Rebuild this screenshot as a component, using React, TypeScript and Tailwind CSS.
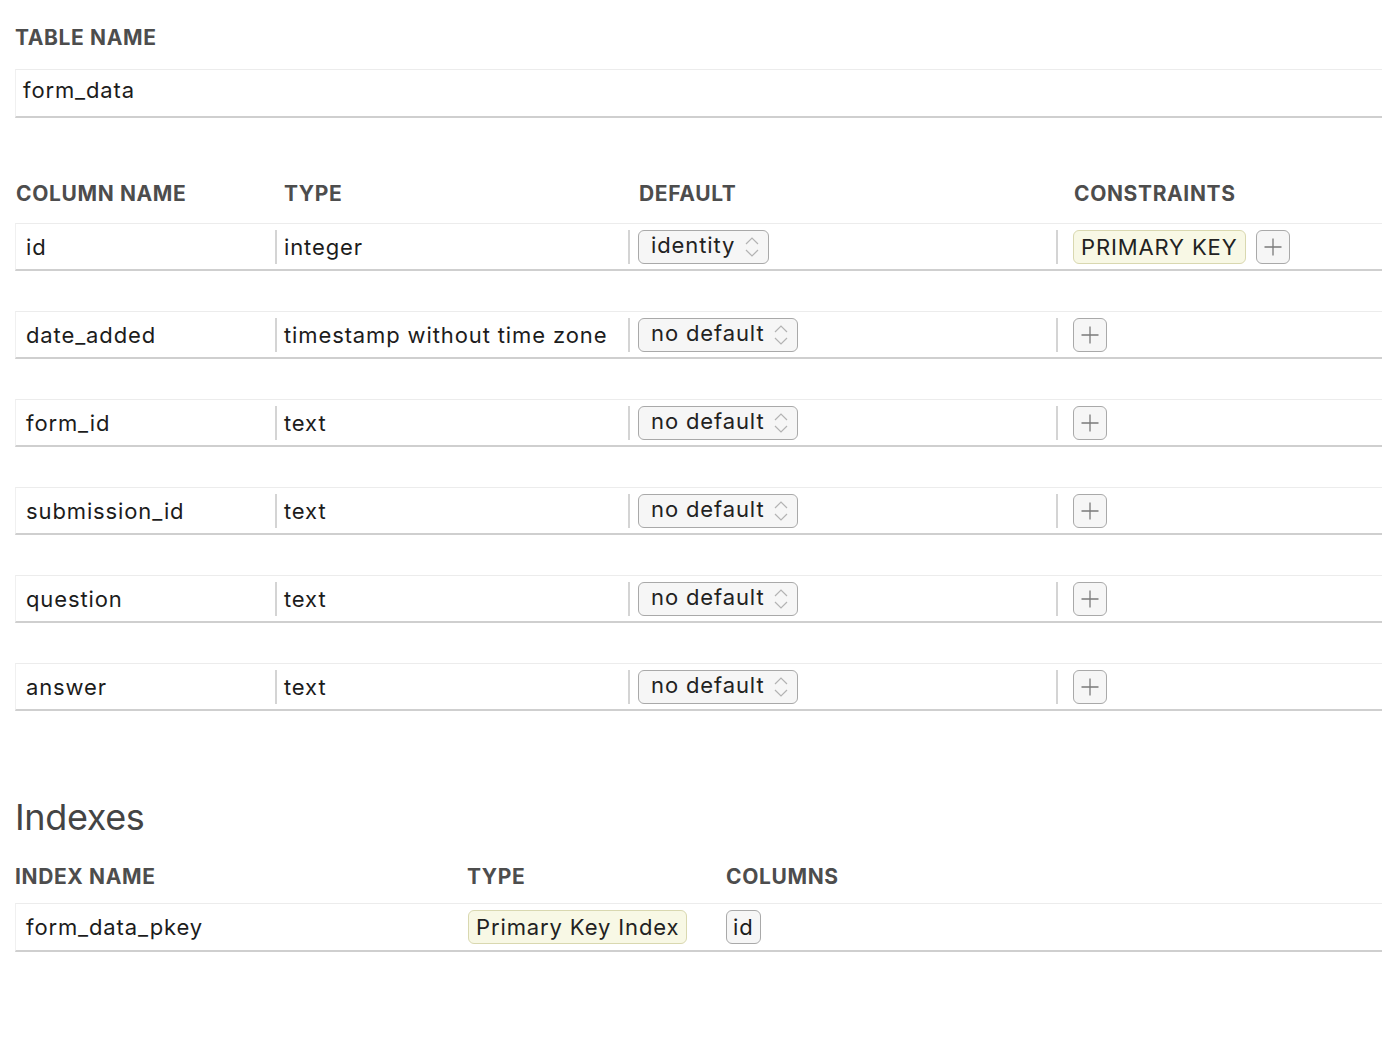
import React from 'react'

type Column = {
  name: string
  type: string
  def: string
  constraint?: string
}

const columns: Column[] = [
  { name: 'id', type: 'integer', def: 'identity', constraint: 'PRIMARY KEY' },
  { name: 'date_added', type: 'timestamp without time zone', def: 'no default' },
  { name: 'form_id', type: 'text', def: 'no default' },
  { name: 'submission_id', type: 'text', def: 'no default' },
  { name: 'question', type: 'text', def: 'no default' },
  { name: 'answer', type: 'text', def: 'no default' },
]

function Chevrons() {
  return (
    <svg width="18" height="26" viewBox="0 0 18 26" fill="none" stroke="#b3b3b3" strokeWidth="1.2">
      <path d="M3 10 L9 4 L15 10" />
      <path d="M3 16 L9 22 L15 16" />
    </svg>
  )
}

function Select({ value }: { value: string }) {
  return (
    <div className="inline-flex h-[34px] items-center gap-[8px] rounded-[6px] border-[1.5px] border-[#a9a9a9] bg-[#f6f6f6] pl-[12px] pr-[7px] text-[22px] leading-none tracking-[0.04em] text-[#222]">
      <span className="-mt-[3px]">{value}</span>
      <Chevrons />
    </div>
  )
}

function PlusButton() {
  return (
    <div className="flex h-[34px] w-[34px] items-center justify-center rounded-[6px] border-[1.5px] border-[#a9a9a9] bg-[#f6f6f6]">
      <svg width="20" height="20" viewBox="0 0 20 20" stroke="#7a7a7a" strokeWidth="1.3">
        <path d="M10 1.5 V18.5 M1.5 10 H18.5" />
      </svg>
    </div>
  )
}

function Badge({ children }: { children: React.ReactNode }) {
  return (
    <div className="inline-flex h-[34px] items-center rounded-[6px] border-[1.5px] border-[#d9d8b0] bg-[#f8f8e5] px-[7px] text-[22px] leading-none tracking-[0.04em] text-[#222]">
      {children}
    </div>
  )
}

function Sep() {
  return <div className="h-[34px] w-[2px] shrink-0 bg-[#d4d4d4]" />
}

export default function App() {
  return (
    <div
      className="min-h-[1038px] bg-white pl-[15px] pt-[26px] text-[#1c1c1c]"
      style={{ fontFamily: 'Inter, "Noto Sans", sans-serif' }}
    >
      <div className="text-[21px] font-bold leading-[24px] tracking-[0.03em] text-[#4d4d4d]">TABLE NAME</div>

      <div className="mt-[19px] flex h-[49px] items-center border-t border-l border-b-2 border-t-[#ececec] border-l-[#f0f0f0] border-b-[#cfcfcf] pb-[5px] pl-[7px] text-[22px] tracking-[0.04em]">
        form_data
      </div>

      <div className="mt-[64px] grid grid-cols-[259px_353px_428px_1fr] text-[21px] font-bold leading-[24px] tracking-[0.03em] text-[#4d4d4d]">
        <div className="pl-[1px]">COLUMN NAME</div>
        <div className="pl-[10px]">TYPE</div>
        <div className="pl-[12px]">DEFAULT</div>
        <div className="pl-[19px]">CONSTRAINTS</div>
      </div>

      <div className="mt-[17px] flex flex-col gap-[40px]">
        {columns.map((c) => (
          <div
            key={c.name}
            className="grid h-[48px] grid-cols-[259px_353px_428px_1fr] items-center border-t border-l border-b-2 border-t-[#ececec] border-l-[#f0f0f0] border-b-[#cfcfcf] text-[22px] tracking-[0.04em]"
          >
            <div className="pl-[10px] pt-[2px]">{c.name}</div>
            <div className="flex items-center gap-[7px]">
              <Sep />
              <span className="pt-[2px]">{c.type}</span>
            </div>
            <div className="flex items-center gap-[8px]">
              <Sep />
              <Select value={c.def} />
            </div>
            <div className="flex items-center gap-[15px]">
              <Sep />
              <div className="flex items-center gap-[10px]">
                {c.constraint && <Badge>{c.constraint}</Badge>}
                <PlusButton />
              </div>
            </div>
          </div>
        ))}
      </div>

      <div className="mt-[84px] text-[36px] leading-[44px] tracking-[-0.01em] text-[#444]">Indexes</div>

      <div className="mt-[26px] grid grid-cols-[452px_259px_1fr] text-[21px] font-bold leading-[24px] tracking-[0.03em] text-[#4d4d4d]">
        <div>INDEX NAME</div>
        <div>TYPE</div>
        <div>COLUMNS</div>
      </div>

      <div className="mt-[14px] grid h-[49px] grid-cols-[452px_258px_1fr] items-center border-t border-l border-b-2 border-t-[#ececec] border-l-[#f0f0f0] border-b-[#cfcfcf] text-[22px] tracking-[0.04em]">
        <div className="pl-[10px]">form_data_pkey</div>
        <div>
          <Badge>Primary Key Index</Badge>
        </div>
        <div>
          <div className="inline-flex h-[34px] items-center rounded-[6px] border-[1.5px] border-[#a9a9a9] bg-[#f6f6f6] px-[6px] leading-none">
            id
          </div>
        </div>
      </div>
    </div>
  )
}
